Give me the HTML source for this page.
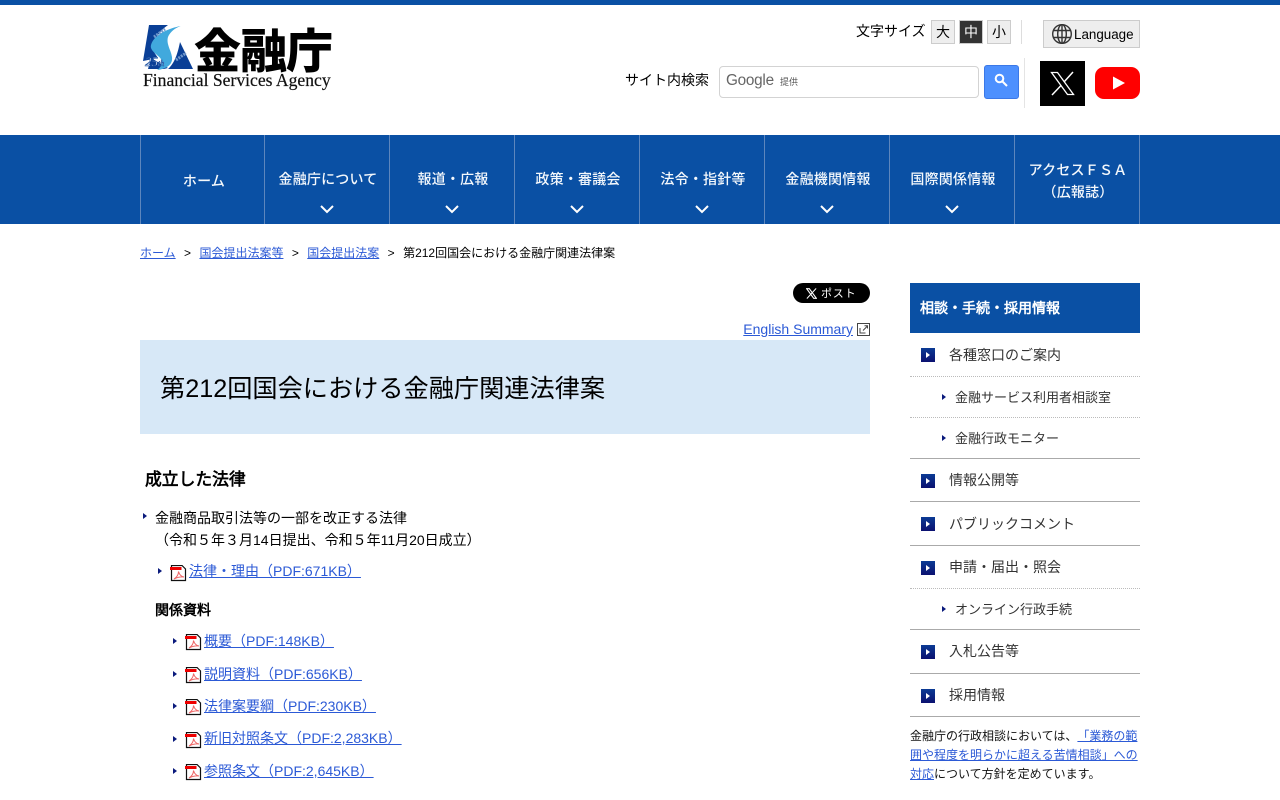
<!DOCTYPE html>
<html lang="ja"><head><meta charset="utf-8"><title>第212回国会における金融庁関連法律案</title>
<style>
html,body{margin:0;padding:0;background:#fff}
body{width:1280px;height:800px;overflow:hidden;position:relative;font-family:"Liberation Sans","WenQuanYi Zen Hei",sans-serif;color:#000;font-size:14px;text-spacing-trim:space-all}
.a{position:absolute;white-space:nowrap}
a{color:#2c5ad6;text-decoration:underline}
i{font-family:"Noto Sans CJK JP",sans-serif;font-style:normal}
.nav{position:absolute;top:135px;width:124px;height:89px;border-left:1px solid #5d86bd;color:#f4f8fc;font-family:"Noto Sans CJK JP",sans-serif;font-weight:500;font-size:14px;text-align:center}
.nav span{position:absolute;left:1px;right:-1px;top:34px;line-height:20px;letter-spacing:.2px}
.nav svg{position:absolute;left:55px;top:70px}
.fs{position:absolute;top:20px;width:22px;height:22px;border:1px solid #ccc;background:#eee;text-align:center;line-height:22px;font-size:14px}
.l1{position:absolute;left:949px;color:#333;font-size:14px;white-space:nowrap}
.l2{position:absolute;left:955px;color:#333;font-size:13px;white-space:nowrap}
.bi{position:absolute;left:921px;width:14px;height:14px;background:linear-gradient(#0b3a94,#0b1070)}
.bi:after{content:"";position:absolute;left:5px;top:4px;border-left:4px solid #fff;border-top:3px solid transparent;border-bottom:3px solid transparent}
.tri{position:absolute;width:0;height:0;border-left:4px solid #0a1a7c;border-top:3px solid transparent;border-bottom:3px solid transparent}
.hr{position:absolute;left:910px;width:230px;border-top:1px solid #aaa}
.dot{position:absolute;left:910px;width:230px;border-top:1px dotted #bbb}
.pdf{position:absolute;width:17px;height:17px}
</style></head><body>
<div style="position:absolute;left:0;top:0;width:1280px;height:5px;background:#0a50a4"></div>

<svg style="position:absolute;left:142px;top:24px" width="52" height="50" viewBox="0 0 52 50">
<path d="M7 1H26C16 8 10 18 12 28L16 34 1 37Z" fill="#0a3f96"/>
<path d="M38 18L51 45H26C33 39 36 28 38 18Z" fill="#0a3f96"/>
<path d="M9 34L26 44 22 45H6Z" fill="#0a3f96"/>
<path d="M38.700 2C28 4 12 10 9 21 7 28 20 32 20 38 20 41 18 44 15 46 24 45 31 41 30 33 29 26 24 20 26 13 28 8 33 4 38.700 2Z" fill="#41a9dd"/>
<path d="M12 13L23 5" stroke="#6f97cc" stroke-width="3" stroke-dasharray="2 1"/>
<path d="M34 36L44 29" stroke="#6f97cc" stroke-width="3" stroke-dasharray="2 1"/>
<text x="3" y="42" font-family="Liberation Serif,serif" font-style="italic" font-size="13" fill="#fff" stroke="#1a4fa0" stroke-width=".5">25<tspan font-size="8">th</tspan></text>
</svg>
<div class="a" style="left:194px;top:20px;font-size:47px;line-height:56px;font-weight:900;font-family:'Noto Sans CJK JP',sans-serif;letter-spacing:-1px">金融庁</div>
<div class="a" style="left:143px;top:71px;font:17.600px/18px 'Liberation Serif',serif;color:#111;-webkit-text-stroke:.2px #111">Financial Services Agency</div>

<div class="a" style="left:856px;top:22px;font-size:14px;line-height:18px">文字サイズ</div>
<div class="fs" style="left:931px">大</div>
<div class="fs" style="left:959px;background:#333;color:#fff;border-color:#ccc">中</div>
<div class="fs" style="left:987px">小</div>
<div style="position:absolute;left:1021px;top:20px;height:24px;border-left:1px solid #ddd"></div>
<div style="position:absolute;left:1043px;top:20px;width:95px;height:26px;border:1px solid #ccc;background:#eee"></div>
<svg style="position:absolute;left:1051px;top:23px" width="22" height="22" viewBox="0 0 22 22" fill="none" stroke="#333" stroke-width="1.400"><circle cx="11" cy="11" r="9.300"/><ellipse cx="11" cy="11" rx="4.300" ry="9.300"/><path d="M11 1.700V20.300M2.600 7.500H19.400M2.600 14.500H19.400"/></svg>
<div class="a" style="left:1074px;top:27px;font-size:13.400px;line-height:16px">Language</div>

<div class="a" style="left:625px;top:71px;font-size:14px;line-height:18px">サイト内検索</div>
<div style="position:absolute;left:719px;top:66px;width:258px;height:30px;border:1px solid #d3d3d3;border-radius:4px;background:#fff"></div>
<div class="a" style="left:726px;top:71px;font-size:15.300px;line-height:20px;color:#666;letter-spacing:-.25px">Google</div>
<div class="a" style="left:780px;top:76px;font-size:9px;line-height:12px;color:#555">提供</div>
<div style="position:absolute;left:984px;top:65px;width:33px;height:32px;border:1px solid #3b78e7;background:#4d90fe;border-radius:3px"></div>
<svg style="position:absolute;left:994px;top:73px" width="15" height="15" viewBox="0 0 15 15" fill="none" stroke="#fff" stroke-width="2"><circle cx="5.500" cy="5.500" r="3.800"/><path d="M8.500 8.500L13 13"/></svg>
<div style="position:absolute;left:1024px;top:58px;height:50px;border-left:1px solid #e4e4e4"></div>
<div style="position:absolute;left:1040px;top:61px;width:45px;height:45px;background:#000"></div>
<svg style="position:absolute;left:1050px;top:71px" width="25" height="25" viewBox="0 0 25 25" fill="none" stroke="#fff"><path d="M1.500 1.500H7.500L23.500 23.500H17.500Z" stroke-width="1.300"/><path d="M23 1L14 11M11 14.500L2 24" stroke-width="1.500"/></svg>
<div style="position:absolute;left:1095px;top:67px;width:45px;height:32px;background:#f00;border-radius:9px"></div>
<svg style="position:absolute;left:1095px;top:67px" width="45" height="32"><path d="M18 9.500L30 16 18 22.500Z" fill="#fff"/></svg>

<div style="position:absolute;left:0;top:135px;width:1280px;height:89px;background:#0a50a4"></div>
<div class="nav" style="left:140px"><span style="top:36px">ホーム</span></div>
<div class="nav" style="left:264px;width:124px"><span>金融庁について</span><svg width="14" height="9" fill="none" stroke="#fff" stroke-width="2"><path d="M1 1L7 7 13 1"/></svg></div>
<div class="nav" style="left:389px"><span>報道・広報</span><svg width="14" height="9" fill="none" stroke="#fff" stroke-width="2"><path d="M1 1L7 7 13 1"/></svg></div>
<div class="nav" style="left:514px"><span>政策・審議会</span><svg width="14" height="9" fill="none" stroke="#fff" stroke-width="2"><path d="M1 1L7 7 13 1"/></svg></div>
<div class="nav" style="left:639px"><span>法令・指針等</span><svg width="14" height="9" fill="none" stroke="#fff" stroke-width="2"><path d="M1 1L7 7 13 1"/></svg></div>
<div class="nav" style="left:764px"><span>金融機関情報</span><svg width="14" height="9" fill="none" stroke="#fff" stroke-width="2"><path d="M1 1L7 7 13 1"/></svg></div>
<div class="nav" style="left:889px"><span>国際関係情報</span><svg width="14" height="9" fill="none" stroke="#fff" stroke-width="2"><path d="M1 1L7 7 13 1"/></svg></div>
<div class="nav" style="left:1014px;border-right:1px solid #5d86bd"><span style="top:24px;line-height:22px">アクセスＦＳＡ<br>（広報誌）</span></div>

<div class="a" style="left:140px;top:245px;font-size:12px;line-height:16px"><a href="#">ホーム</a><span style="margin:0 8.400px">&gt;</span><a href="#">国会提出法案等</a><span style="margin:0 8.400px">&gt;</span><a href="#">国会提出法案</a><span style="margin:0 8.400px">&gt;</span>第212回国会における金融庁関連法律案</div>

<div style="position:absolute;left:793px;top:283px;width:77px;height:20px;background:#000;border-radius:10px"></div>
<svg style="position:absolute;left:806px;top:288px" width="11" height="11" viewBox="0 0 25 25" fill="none" stroke="#fff" stroke-width="2.500"><path d="M1.500 1.500H7.500L23.500 23.500H17.500Z"/><path d="M23 1L2 24"/></svg>
<div class="a" style="left:821px;top:286px;font-size:11px;line-height:16px;color:#fff;letter-spacing:.8px">ポスト</div>

<div class="a" style="right:427px;top:321px;font-size:14px;line-height:16px"><a href="#">English Summary</a></div>
<svg style="position:absolute;left:857px;top:323px" width="13" height="13" viewBox="0 0 13 13" fill="none" stroke="#444"><rect x=".5" y=".5" width="12" height="12"/><path d="M3 5V10H8.500M6 7.500L10.500 3M7.500 2.800H10.500V5.500"/></svg>

<div style="position:absolute;left:140px;top:340px;width:730px;height:94px;background:#d7e8f7"></div>
<div class="a" style="left:160px;top:371px;font-size:25.200px;line-height:36px">第212回国会における金融庁関連法律案</div>

<div class="a" style="left:145px;top:468px;font-size:16.800px;line-height:24px;font-weight:700">成立した法律</div>

<div class="tri" style="left:143px;top:513px"></div>
<div class="a" style="left:155px;top:507px;font-size:14px;line-height:22px">金融商品取引法等の一部を改正する法律<br>（令和５年３月14日提出、令和５年11月20日成立）</div>

<div class="tri" style="left:158px;top:568px"></div>
<svg class="pdf" style="left:170px;top:565px" viewBox="0 0 17 17"><path d="M1.500.500H12L15.500 4V15.500H1.500Z" fill="#fff" stroke="#111" stroke-width="1.200"/><path d="M0 2H11.500V5H0Z" fill="#e00"/><path d="M4 14C7 12 8.500 9 8.500 6.500 9.500 10 11 11.500 14 12 10 11.500 7 12.500 4 14Z" fill="none" stroke="#e66"/></svg>
<div class="a" style="left:189px;top:561px;font-size:14px;line-height:20px"><a href="#">法律<i>・</i>理由（PDF:671KB）</a></div>

<div class="a" style="left:155px;top:600px;font-size:14px;line-height:20px;font-weight:700">関係資料</div>

<div class="tri" style="left:173px;top:638px"></div>
<svg class="pdf" style="left:185px;top:634px" viewBox="0 0 17 17"><path d="M1.500.500H12L15.500 4V15.500H1.500Z" fill="#fff" stroke="#111" stroke-width="1.200"/><path d="M0 2H11.500V5H0Z" fill="#e00"/><path d="M4 14C7 12 8.500 9 8.500 6.500 9.500 10 11 11.500 14 12 10 11.500 7 12.500 4 14Z" fill="none" stroke="#e66"/></svg>
<div class="a" style="left:204px;top:631px;font-size:14px;line-height:20px"><a href="#">概要（PDF:148KB）</a></div>

<div class="tri" style="left:173px;top:671px"></div>
<svg class="pdf" style="left:185px;top:667px" viewBox="0 0 17 17"><path d="M1.500.500H12L15.500 4V15.500H1.500Z" fill="#fff" stroke="#111" stroke-width="1.200"/><path d="M0 2H11.500V5H0Z" fill="#e00"/><path d="M4 14C7 12 8.500 9 8.500 6.500 9.500 10 11 11.500 14 12 10 11.500 7 12.500 4 14Z" fill="none" stroke="#e66"/></svg>
<div class="a" style="left:204px;top:664px;font-size:14px;line-height:20px"><a href="#">説明資料（PDF:656KB）</a></div>

<div class="tri" style="left:173px;top:703px"></div>
<svg class="pdf" style="left:185px;top:699px" viewBox="0 0 17 17"><path d="M1.500.500H12L15.500 4V15.500H1.500Z" fill="#fff" stroke="#111" stroke-width="1.200"/><path d="M0 2H11.500V5H0Z" fill="#e00"/><path d="M4 14C7 12 8.500 9 8.500 6.500 9.500 10 11 11.500 14 12 10 11.500 7 12.500 4 14Z" fill="none" stroke="#e66"/></svg>
<div class="a" style="left:204px;top:696px;font-size:14px;line-height:20px"><a href="#">法律案要綱（PDF:230KB）</a></div>

<div class="tri" style="left:173px;top:736px"></div>
<svg class="pdf" style="left:185px;top:732px" viewBox="0 0 17 17"><path d="M1.500.500H12L15.500 4V15.500H1.500Z" fill="#fff" stroke="#111" stroke-width="1.200"/><path d="M0 2H11.500V5H0Z" fill="#e00"/><path d="M4 14C7 12 8.500 9 8.500 6.500 9.500 10 11 11.500 14 12 10 11.500 7 12.500 4 14Z" fill="none" stroke="#e66"/></svg>
<div class="a" style="left:204px;top:728px;font-size:14px;line-height:20px"><a href="#">新旧対照条文（PDF:2,283KB）</a></div>

<div class="tri" style="left:173px;top:768px"></div>
<svg class="pdf" style="left:185px;top:764px" viewBox="0 0 17 17"><path d="M1.500.500H12L15.500 4V15.500H1.500Z" fill="#fff" stroke="#111" stroke-width="1.200"/><path d="M0 2H11.500V5H0Z" fill="#e00"/><path d="M4 14C7 12 8.500 9 8.500 6.500 9.500 10 11 11.500 14 12 10 11.500 7 12.500 4 14Z" fill="none" stroke="#e66"/></svg>
<div class="a" style="left:204px;top:761px;font-size:14px;line-height:20px"><a href="#">参照条文（PDF:2,645KB）</a></div>

<div style="position:absolute;left:910px;top:283px;width:230px;height:50px;background:#0a50a4"></div>
<div class="a" style="left:920px;top:298px;font-size:14px;line-height:20px;font-weight:700;color:#fff">相談<i>・</i>手続<i>・</i>採用情報</div>

<div class="bi" style="top:348px"></div><div class="l1" style="top:345px;line-height:20px">各種窓口のご案内</div>
<div class="dot" style="top:376px"></div>
<div class="tri" style="left:942px;top:394px"></div><div class="l2" style="top:388px;line-height:20px">金融サービス利用者相談室</div>
<div class="dot" style="top:417px"></div>
<div class="tri" style="left:942px;top:435px"></div><div class="l2" style="top:429px;line-height:20px">金融行政モニター</div>
<div class="hr" style="top:458px"></div>
<div class="bi" style="top:474px"></div><div class="l1" style="top:470px;line-height:20px">情報公開等</div>
<div class="hr" style="top:501px"></div>
<div class="bi" style="top:517px"></div><div class="l1" style="top:514px;line-height:20px">パブリックコメント</div>
<div class="hr" style="top:545px"></div>
<div class="bi" style="top:561px"></div><div class="l1" style="top:557px;line-height:20px">申請<i>・</i>届出<i>・</i>照会</div>
<div class="dot" style="top:588px"></div>
<div class="tri" style="left:942px;top:606px"></div><div class="l2" style="top:600px;line-height:20px">オンライン行政手続</div>
<div class="hr" style="top:629px"></div>
<div class="bi" style="top:645px"></div><div class="l1" style="top:641px;line-height:20px">入札公告等</div>
<div class="hr" style="top:673px"></div>
<div class="bi" style="top:689px"></div><div class="l1" style="top:685px;line-height:20px">採用情報</div>
<div class="hr" style="top:716px"></div>
<div style="position:absolute;left:910px;top:727px;width:230px;font-size:12px;line-height:19px;color:#111">金融庁の行政相談においては、<a href="#">「業務の範囲や程度を明らかに超える苦情相談」への対応</a>について方針を定めています。</div>
</body></html>
